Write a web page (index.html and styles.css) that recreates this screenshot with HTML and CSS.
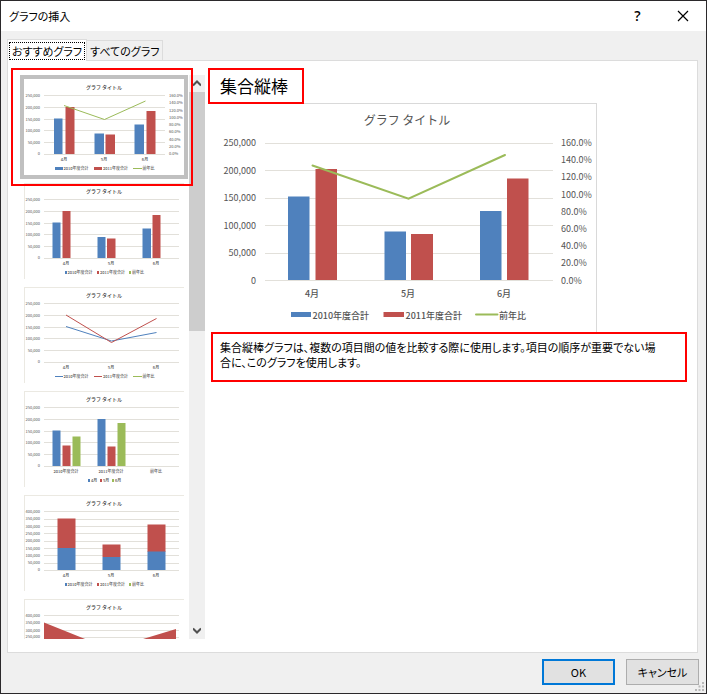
FILE: index.html
```html
<!DOCTYPE html>
<html lang="ja">
<head>
<meta charset="utf-8">
<title>グラフの挿入</title>
<link rel="stylesheet" href="styles.css">
</head>
<body>
<div class="dialog" role="dialog" aria-labelledby="dialog-title">
  <header class="titlebar">
    <h1 class="title" id="dialog-title">グラフの挿入</h1>
    <button class="caption help" type="button" aria-label="ヘルプ">?</button>
    <button class="caption" type="button" aria-label="閉じる">
      <svg width="12" height="12" viewBox="0 0 12 12"><path d="M1 1 11 11M11 1 1 11" stroke="#000" stroke-width="1.2" fill="none"/></svg>
    </button>
  </header>

  <div class="body">
    <div class="tabs" role="tablist">
      <button class="tab active" type="button" role="tab" aria-selected="true"><span>おすすめグラフ</span></button>
      <button class="tab" type="button" role="tab" aria-selected="false"><span>すべてのグラフ</span></button>
    </div>

    <main class="panel">
      <div class="picker">
        <div class="thumbs">
          <button class="thumb selected" type="button" aria-label="集合縦棒 複合">
            <svg class="mini" viewBox="0 0 160 96">
              <path class="grid" d="M20 16.5H141M20 28.5H141M20 40.5H141M20 51.5H141M20 63.5H141M20 75.5H141"/>
              <text class="mt" x="80" y="10">グラフ タイトル</text>
              <g class="yl"><text x="16" y="18">250,000</text><text x="16" y="30">200,000</text><text x="16" y="42">150,000</text><text x="16" y="53">100,000</text><text x="16" y="65">50,000</text><text x="16" y="76">0</text></g>
              <g class="yr"><text x="145" y="18">160.0%</text><text x="145" y="25">140.0%</text><text x="145" y="33">120.0%</text><text x="145" y="40">100.0%</text><text x="145" y="47">80.0%</text><text x="145" y="54">60.0%</text><text x="145" y="62">40.0%</text><text x="145" y="69">20.0%</text><text x="145" y="76">0.0%</text></g>
              <path class="blue" d="M30 39.5h8.5V75H30zM70.5 54.5H80V75h-9.500zM110.500 45.500h9.500V75h-9.500z"/>
              <path class="red" d="M41.500 28h9V75h-9zM81.500 55.500h9.500V75h-9.500zM122.500 32h9V75h-9z"/>
              <path class="line green-s" d="M40 26.500 80.500 40.500 121.500 22"/>
              <g class="xl"><text x="40" y="82">4月</text><text x="80" y="82">5月</text><text x="121" y="82">6月</text></g>
              <path class="blue" d="M31 88h8v3h-8z"/><path class="red" d="M70 88h8v3h-8z"/><path class="line green-s" d="M109 89.500h9"/>
              <g class="lg"><text x="39.500" y="91">2010年度合計</text><text x="79" y="91">2011年度合計</text><text x="118.500" y="91">前年比</text></g>
            </svg>
          </button>

          <button class="thumb" type="button" aria-label="集合縦棒">
            <svg class="mini" viewBox="0 0 160 96">
              <path class="grid" d="M20 16.5H155M20 28.5H155M20 40.5H155M20 51.5H155M20 63.5H155M20 75.5H155"/>
              <text class="mt" x="80" y="10">グラフ タイトル</text>
              <g class="yl"><text x="16" y="18">250,000</text><text x="16" y="30">200,000</text><text x="16" y="42">150,000</text><text x="16" y="53">100,000</text><text x="16" y="65">50,000</text><text x="16" y="76">0</text></g>
              <path class="blue" d="M28.500 39.500h8V75h-8zM73.500 54h8V75h-8zM118.500 45.500h8.500V75h-8.500z"/>
              <path class="red" d="M38.500 28h8V75h-8zM83 55.500h8.500V75H83zM128.500 32h8V75h-8z"/>
              <g class="xl"><text x="42" y="82">4月</text><text x="87" y="82">5月</text><text x="132" y="82">6月</text></g>
              <path class="blue" d="M41 88h2v3h-2z"/><path class="red" d="M73 88h2v3h-2z"/><path class="green" d="M105 88h2v3h-2z"/>
              <g class="lg"><text x="43.500" y="91">2010年度合計</text><text x="76" y="91">2011年度合計</text><text x="108" y="91">前年比</text></g>
            </svg>
          </button>

          <button class="thumb" type="button" aria-label="折れ線">
            <svg class="mini" viewBox="0 0 160 96">
              <path class="grid" d="M20 16.5H155M20 28.5H155M20 40.5H155M20 51.5H155M20 63.5H155M20 75.5H155"/>
              <text class="mt" x="80" y="10">グラフ タイトル</text>
              <g class="yl"><text x="16" y="18">250,000</text><text x="16" y="30">200,000</text><text x="16" y="42">150,000</text><text x="16" y="53">100,000</text><text x="16" y="65">50,000</text><text x="16" y="76">0</text></g>
              <path class="line blue-s" d="M42 39.500 87.500 54 132.500 45.500"/>
              <path class="line red-s" d="M42 28 87.500 55.500 132.500 31.500"/>
              <g class="xl"><text x="42" y="82">4月</text><text x="87" y="82">5月</text><text x="132" y="82">6月</text></g>
              <path class="line blue-s" d="M31 89.500h8"/><path class="line red-s" d="M70 89.500h8"/><path class="line green-s" d="M109 89.500h9"/>
              <g class="lg"><text x="39.500" y="91">2010年度合計</text><text x="79" y="91">2011年度合計</text><text x="118.500" y="91">前年比</text></g>
            </svg>
          </button>

          <button class="thumb" type="button" aria-label="集合縦棒 月別">
            <svg class="mini" viewBox="0 0 160 96">
              <path class="grid" d="M20 16.5H155M20 28.5H155M20 40.5H155M20 51.5H155M20 63.5H155M20 75.5H155"/>
              <text class="mt" x="80" y="10">グラフ タイトル</text>
              <g class="yl"><text x="16" y="18">250,000</text><text x="16" y="30">200,000</text><text x="16" y="42">150,000</text><text x="16" y="53">100,000</text><text x="16" y="65">50,000</text><text x="16" y="76">0</text></g>
              <path class="blue" d="M28.500 39.500h8V75h-8zM73.500 28h8V75h-8z"/>
              <path class="red" d="M38.500 54.500h8V75h-8zM83.500 55.500h8V75h-8z"/>
              <path class="green" d="M48.500 45.500h8V75h-8zM93.500 32h8V75h-8z"/>
              <g class="xl"><text x="42" y="82">2010年度合計</text><text x="87" y="82">2011年度合計</text><text x="132" y="82">前年比</text></g>
              <path class="blue" d="M64 88h2v3h-2z"/><path class="red" d="M76 88h2v3h-2z"/><path class="green" d="M88 88h2v3h-2z"/>
              <g class="lg"><text x="67" y="91">4月</text><text x="79" y="91">5月</text><text x="91" y="91">6月</text></g>
            </svg>
          </button>

          <button class="thumb" type="button" aria-label="積み上げ縦棒">
            <svg class="mini" viewBox="0 0 160 96">
              <path class="grid" d="M20 16.5H155M20 24.5H155M20 31.5H155M20 38.5H155M20 46.5H155M20 53.5H155M20 60.500H155M20 68.500H155M20 75.500H155"/>
              <text class="mt" x="80" y="10">グラフ タイトル</text>
              <g class="yl"><text x="16" y="18">400,000</text><text x="16" y="25">350,000</text><text x="16" y="33">300,000</text><text x="16" y="40">250,000</text><text x="16" y="47">200,000</text><text x="16" y="55">150,000</text><text x="16" y="62">100,000</text><text x="16" y="69">50,000</text><text x="16" y="76">0</text></g>
              <path class="red" d="M33.500 23.500h18V53h-18zM78.500 49.500h18V62h-18zM123.500 29.500h18V57h-18z"/>
              <path class="blue" d="M33.500 53h18V75h-18zM78.500 62h18V75h-18zM123.500 56.500h18V75h-18z"/>
              <g class="xl"><text x="42" y="82">4月</text><text x="87" y="82">5月</text><text x="132" y="82">6月</text></g>
              <path class="blue" d="M41 88h2v3h-2z"/><path class="red" d="M73 88h2v3h-2z"/><path class="green" d="M105 88h2v3h-2z"/>
              <g class="lg"><text x="43.500" y="91">2010年度合計</text><text x="76" y="91">2011年度合計</text><text x="108" y="91">前年比</text></g>
            </svg>
          </button>

          <button class="thumb" type="button" aria-label="積み上げ面">
            <svg class="mini" viewBox="0 0 160 96">
              <path class="grid" d="M20 16.500H155M20 24.500H155M20 31.500H155M20 38.500H155"/>
              <text class="mt" x="80" y="10">グラフ タイトル</text>
              <g class="yl"><text x="16" y="18">400,000</text><text x="16" y="25">350,000</text><text x="16" y="33">300,000</text><text x="16" y="39">250,000</text></g>
              <path class="red" d="M20 23.500 86 50 152 30V75H20z"/>
              <path class="blue" d="M20 53 86 62 152 57V75H20z"/>
            </svg>
          </button>
        </div>
        <div class="scrollbar">
          <button class="arrow" type="button" aria-label="上へ"><svg width="8" height="7" viewBox="0 0 8 7"><path d="M0 5.500 4 1.500 8 5.500" stroke="#505050" stroke-width="2" fill="none"/></svg></button>
          <div class="track"><div class="handle"></div></div>
          <button class="arrow" type="button" aria-label="下へ"><svg width="8" height="7" viewBox="0 0 8 7"><path d="M0 1.500 4 5.500 8 1.500" stroke="#505050" stroke-width="2" fill="none"/></svg></button>
        </div>
        <div class="callout" aria-hidden="true"></div>
      </div>

      <section class="preview">
        <h2 class="chart-name">集合縦棒</h2>
        <div class="chart">
          <svg class="big" viewBox="0 0 388 228" role="img" aria-label="集合縦棒グラフ">
            <path class="grid" d="M57 39.500H345M57 66.500H345M57 94.500H345M57 121.500H345M57 149.500H345M57 176.500H345"/>
            <text class="bt" x="199" y="21">グラフ タイトル</text>
            <g class="yl"><text x="48" y="42">250,000</text><text x="48" y="70">200,000</text><text x="48" y="97">150,000</text><text x="48" y="125">100,000</text><text x="48" y="152">50,000</text><text x="48" y="180">0</text></g>
            <g class="yr"><text x="353" y="42">160.0%</text><text x="353" y="59">140.0%</text><text x="353" y="76">120.0%</text><text x="353" y="94">100.0%</text><text x="353" y="111">80.0%</text><text x="353" y="128">60.0%</text><text x="353" y="145">40.0%</text><text x="353" y="162">20.0%</text><text x="353" y="180">0.0%</text></g>
            <path class="blue" d="M80 92.500h21.500V176H80zM176.500 127.500H198V176h-21.500zM272 107h21.500V176H272z"/>
            <path class="red" d="M107.500 65H129V176h-21.500zM203 130h22V176h-22zM299 74.500h21.500V176H299z"/>
            <path class="bline" d="M104.500 61.500 200.500 94.700 297 51"/>
            <g class="xl"><text x="104" y="193">4月</text><text x="200" y="193">5月</text><text x="296" y="193">6月</text></g>
            <path class="blue" d="M83 208h20v5H83z"/><path class="red" d="M175.500 208h20.500v5h-20.500z"/><path class="bline" d="M268 210.500h21.500"/>
            <g class="lg"><text x="104.500" y="215">2010年度合計</text><text x="197.500" y="215">2011年度合計</text><text x="291" y="215">前年比</text></g>
          </svg>
        </div>
        <p class="note">集合縦棒グラフは、複数の項目間の値を比較する際に使用します。項目の順序が重要でない場合に、このグラフを使用します。</p>
      </section>
    </main>

    <footer class="actions">
      <button class="btn primary" type="button">OK</button>
      <button class="btn" type="button">キャンセル</button>
    </footer>
  </div>
  <svg class="grip" width="9" height="9" viewBox="0 0 9 9"><path d="M7 0h2v2H7zM3.500 3.500h2v2h-2zM7 3.500h2v2H7zM0 7h2v2H0zM3.500 7h2v2h-2zM7 7h2v2H7z" fill="#b8b8b8"/></svg>
</div>
</body>
</html>
```
FILE: styles.css
```css
* { box-sizing: border-box; }

body {
  margin: 0;
  color: #000;
  font: 11px/15px "Noto Sans CJK JP", sans-serif;
  font-feature-settings: "palt";
}

button {
  margin: 0;
  padding: 0;
  border: 0;
  background: none;
  color: inherit;
  font: inherit;
  font-feature-settings: inherit;
}

svg { display: block; }

.dialog {
  position: relative;
  display: flex;
  flex-direction: column;
  height: 100vh;
  border: 1px solid #2b292b;
  background: #f0f0f0;
}

/* Title bar */
.titlebar {
  display: flex;
  align-items: center;
  height: 30px;
  padding: 0 1px 0 8px;
  background: #fff;
}
.title { flex: 1; margin: 0; font-size: 11px; font-weight: 400; }
.caption {
  display: flex;
  align-items: center;
  justify-content: center;
  width: 45px;
  height: 30px;
}
.help { font: 600 14px/30px "Open Sans", sans-serif; }

/* Tabs and panel */
.body {
  flex: 1;
  display: flex;
  flex-direction: column;
  min-height: 0;
  padding: 8px 8px 8px 6px;
}
.tabs { display: flex; align-items: flex-end; }
.tab {
  height: 20px;
  padding: 0 3px;
  border: 1px solid #dcdcdc;
  border-bottom: 0;
  border-left: 0;
  line-height: 18px;
}
.tab.active {
  height: 22px;
  margin-bottom: -1px;
  padding: 1px;
  border-left: 1px solid #dcdcdc;
  background: #fff;
  z-index: 1;
}
.tab.active span {
  display: block;
  padding: 0 2px;
  border: 1px dotted #000;
  line-height: 16px;
}
.panel {
  flex: 1;
  display: flex;
  gap: 3px;
  min-height: 0;
  padding: 7px 10px 13px 12px;
  border: 1px solid #dcdcdc;
  background: #fff;
}

/* Thumbnail picker */
.picker {
  position: relative;
  flex: none;
  display: flex;
  gap: 1px;
  padding-top: 7px;
}
.thumbs { width: 168px; overflow: hidden; }
.thumb {
  display: block;
  width: 100%;
  border: 4px solid transparent;
}
.thumb.selected { border-color: #c0c0c0; }
.mini {
  width: 100%;
  box-shadow: inset 1px 1px #ebe9e2;
}
.selected .mini { box-shadow: none; }
.scrollbar {
  display: flex;
  flex-direction: column;
  width: 16px;
  background: #f0f0f0;
}
.arrow {
  display: flex;
  align-items: center;
  justify-content: center;
  height: 17px;
}
.track { flex: 1; }
.handle { height: 45%; background: #cdcdcd; }
.callout {
  position: absolute;
  top: 0;
  left: -9px;
  width: 182px;
  height: 118px;
  border: 2px solid #f00;
}

/* Preview */
.preview { flex: 1; min-width: 0; }
.chart-name {
  position: relative;
  z-index: 1;
  width: max-content;
  margin: 0;
  padding: 4px 14px 4px 10px;
  border: 2px solid #f00;
  font-size: 17px;
  font-weight: 400;
  line-height: 24px;
}
.chart {
  max-width: 389px;
  margin-top: -1px;
  border-top: 1px solid #d9d9d9;
  border-right: 1px solid #d9d9d9;
}
.note {
  max-width: 476px;
  margin: 0 0 0 3px;
  padding: 6px 26px 10px 7px;
  border: 2px solid #f00;
}

/* Chart drawing */
.grid { stroke: #e2e0da; fill: none; }
.blue { fill: #4f81bd; }
.red { fill: #c0504d; }
.green { fill: #9bbb59; }
.line { fill: none; stroke-width: 1; }
.bline { fill: none; stroke: #9bbb59; stroke-width: 2; stroke-linecap: round; }
.blue-s { stroke: #4f81bd; }
.red-s { stroke: #c0504d; }
.green-s { stroke: #9bbb59; }
svg text { fill: #555; font-feature-settings: normal; }
.mini text { font-size: 4px; }
.mini .mt { fill: #333; font-size: 5px; font-weight: 500; text-anchor: middle; }
.big text { font-size: 9px; }
.big .bt { font-size: 12px; text-anchor: middle; }
.yl { text-anchor: end; }
.xl { text-anchor: middle; }
.xl, .lg { font-weight: 500; }

/* Footer */
.actions {
  display: flex;
  justify-content: flex-end;
  gap: 11px;
  padding-top: 6px;
  margin-right: -1px;
}
.btn {
  width: 73px;
  height: 26px;
  border: 1px solid #adadad;
  background: #e1e1e1;
}
.btn.primary { border: 2px solid #0078d7; }
.grip { position: absolute; right: 2px; bottom: 2px; }
```
